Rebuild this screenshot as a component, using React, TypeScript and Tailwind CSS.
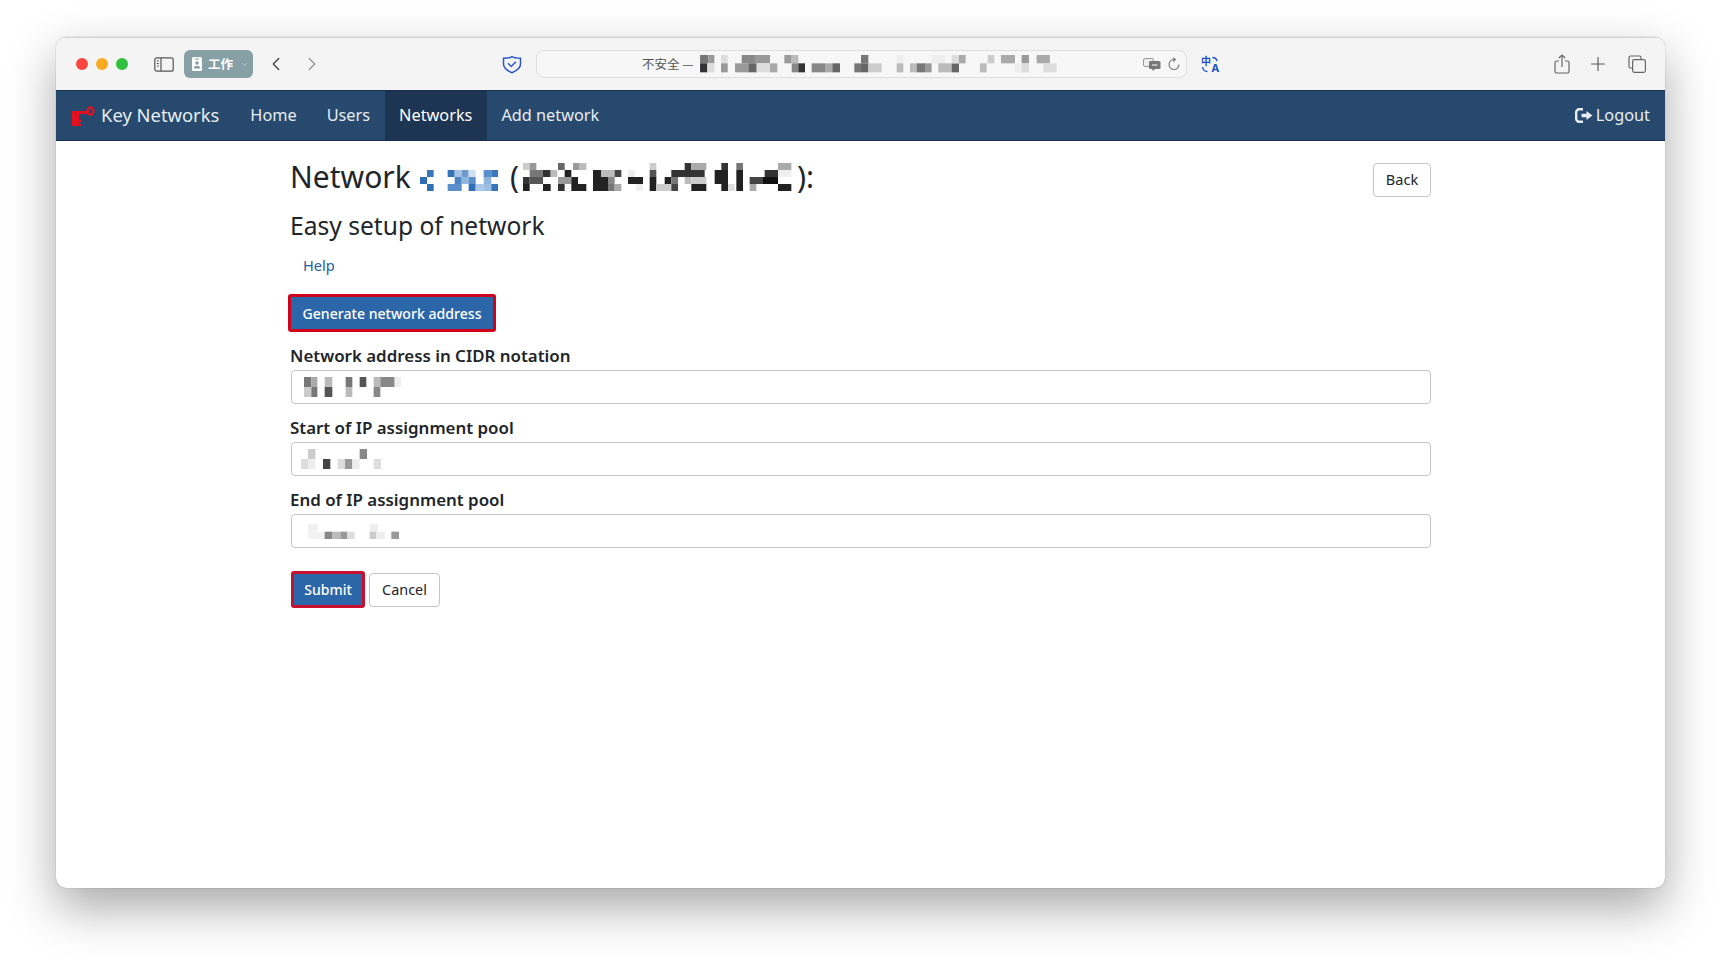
import React from "react";
import { ChevronDown, ChevronLeft, ChevronRight, Plus } from "lucide-react";

type Cell = [number, number, number, string];

// redacted (pixelated) pieces of the screenshot: [x0, x1, row, colour]
function Mosaic({
  x,
  w,
  rows,
  cells,
  className,
}: {
  x: number;
  w: number;
  rows: number[];
  cells: Cell[];
  className?: string;
}) {
  const top = rows[0];
  const h = rows[rows.length - 1] - top;
  return (
    <svg width={w / 3} height={h / 3} viewBox={`${x} ${top} ${w} ${h}`} className={className}>
      {cells.map(([x0, x1, row, fill], i) => (
        <rect key={i} x={x0} y={rows[row]} width={x1 - x0} height={rows[row + 1] - rows[row]} fill={fill} />
      ))}
    </svg>
  );
}

const urlCells: Cell[] = [
  [215, 240, 0, "#777"], [240, 258, 0, "#999"], [215, 237, 1, "#333"], [237, 258, 1, "#ddd"],
  [278, 298, 0, "#ddd"], [278, 298, 1, "#999"],
  [340, 380, 0, "#888"], [380, 425, 0, "#999"], [320, 360, 1, "#999"], [360, 385, 1, "#666"], [385, 425, 1, "#ddd"], [425, 447, 1, "#aaa"],
  [468, 490, 0, "#999"], [490, 510, 0, "#bbb"], [490, 510, 1, "#888"], [510, 530, 1, "#333"],
  [550, 590, 1, "#888"], [590, 612, 1, "#aaa"], [612, 635, 1, "#666"],
  [698, 720, 0, "#777"], [678, 698, 1, "#777"], [698, 720, 1, "#666"], [720, 760, 1, "#ccc"],
  [805, 825, 0, "#eee"], [805, 825, 1, "#bbb"],
  [845, 865, 1, "#bbb"], [865, 890, 1, "#777"], [890, 910, 1, "#999"], [910, 950, 0, "#eee"],
  [930, 970, 1, "#bbb"], [970, 992, 1, "#666"], [970, 992, 0, "#ddd"], [992, 1012, 0, "#aaa"],
  [1055, 1075, 1, "#bbb"], [1078, 1098, 0, "#ccc"],
  [1118, 1160, 0, "#aaa"], [1160, 1180, 1, "#eee"], [1180, 1202, 0, "#999"], [1180, 1202, 1, "#ddd"],
  [1225, 1265, 0, "#aaa"], [1245, 1285, 1, "#ddd"],
];

const blueCells: Cell[] = [
  [14, 35, 2, "#2f6db5"], [35, 55, 1, "#3a78bd"], [35, 55, 3, "#2f6db5"],
  [97, 118, 1, "#3573b8"], [118, 139, 1, "#a5c3e3"], [139, 160, 1, "#6d9bd0"], [118, 139, 2, "#4d84c4"],
  [97, 139, 3, "#5a8fcc"], [139, 160, 2, "#8fb5dc"], [160, 181, 3, "#2f6db5"],
  [160, 181, 1, "#cfe0f1"], [160, 181, 2, "#5a8fcc"], [181, 205, 3, "#a8c6e6"],
  [205, 228, 1, "#5a8fcc"], [205, 228, 2, "#8fb5dc"], [228, 249, 1, "#3a78bd"], [205, 228, 3, "#9dbde0"], [228, 249, 3, "#3573b8"],
];

const darkCells: Cell[] = [
  [325, 345, 0, "#ccc"], [345, 365, 0, "#999"], [430, 450, 0, "#666"], [475, 495, 0, "#999"], [495, 515, 0, "#bbb"],
  [705, 725, 0, "#ccc"], [810, 830, 0, "#333"], [830, 875, 0, "#aaa"], [920, 940, 0, "#333"], [965, 985, 0, "#777"], [1090, 1130, 0, "#aaa"],
  [345, 385, 1, "#777"], [385, 408, 1, "#333"], [408, 428, 1, "#bbb"], [450, 470, 1, "#222"], [535, 560, 1, "#222"], [560, 600, 1, "#bbb"], [600, 620, 1, "#444"],
  [640, 660, 1, "#eee"], [705, 725, 1, "#555"], [770, 870, 1, "#333"], [900, 940, 1, "#222"], [965, 985, 1, "#222"], [1050, 1090, 1, "#333"], [1090, 1130, 1, "#eee"],
  [325, 345, 2, "#333"], [345, 385, 2, "#555"], [430, 470, 2, "#999"], [470, 490, 2, "#222"], [535, 580, 2, "#222"], [580, 600, 2, "#888"], [640, 685, 2, "#222"],
  [705, 725, 2, "#222"], [750, 770, 2, "#222"], [770, 790, 2, "#777"], [810, 830, 2, "#bbb"], [830, 875, 2, "#ccc"], [900, 940, 2, "#222"], [965, 985, 2, "#222"], [1005, 1045, 2, "#444"], [1045, 1090, 2, "#111"],
  [325, 345, 3, "#222"], [385, 408, 3, "#222"], [430, 450, 3, "#333"], [470, 515, 3, "#222"], [535, 580, 3, "#222"], [580, 600, 3, "#777"], [600, 620, 3, "#aaa"],
  [665, 685, 3, "#eee"], [705, 725, 3, "#222"], [725, 770, 3, "#ccc"], [770, 790, 3, "#444"], [830, 875, 3, "#222"], [920, 940, 3, "#222"], [940, 960, 3, "#ddd"],
  [965, 985, 3, "#222"], [1005, 1025, 3, "#aaa"], [1090, 1130, 3, "#222"],
];

const cidrCells: Cell[] = [
  [103, 125, 0, "#777"], [125, 143, 0, "#aaa"], [165, 188, 0, "#bbb"], [228, 248, 0, "#777"], [270, 290, 0, "#555"], [312, 332, 0, "#bbb"], [332, 375, 0, "#888"], [375, 395, 0, "#eee"],
  [103, 125, 1, "#ccc"], [125, 143, 1, "#777"], [165, 188, 1, "#555"], [228, 248, 1, "#bbb"], [312, 332, 1, "#888"],
];

const startCells: Cell[] = [
  [113, 135, 0, "#ccc"], [268, 290, 0, "#888"],
  [92, 113, 1, "#ddd"], [113, 135, 1, "#eee"], [158, 180, 1, "#444"], [202, 224, 1, "#ddd"], [224, 246, 1, "#999"], [246, 268, 1, "#eee"], [310, 332, 1, "#ddd"],
];

const endCells: Cell[] = [
  [115, 145, 0, "#f0f0f0"], [300, 325, 0, "#eee"],
  [115, 165, 1, "#f2f2f2"], [165, 188, 1, "#888"], [188, 212, 1, "#bbb"], [212, 232, 1, "#999"], [232, 255, 1, "#ddd"], [300, 320, 1, "#ccc"], [320, 345, 1, "#eee"], [365, 388, 1, "#999"],
];

function KeyLogo() {
  return (
    <svg width="23" height="20" viewBox="0 0 23 20" fill="none" className="shrink-0">
      <path d="M0 5h14v3H7v12H0z" fill="#e5101f" />
      <ellipse cx="18.5" cy="5" rx="3" ry="3.8" stroke="#e5101f" strokeWidth="2.2" />
      <path d="M14 5l3-.5v3l-3 .5z" fill="#e5101f" />
      <path d="M9 14l-3 3 3 3" stroke="#e5101f" strokeWidth="2" />
    </svg>
  );
}

function LogoutIcon() {
  return (
    <svg width="18" height="15" viewBox="0 0 18 15" className="shrink-0">
      <path d="M8 1.3H4.2A3 3 0 0 0 1.2 4.3v6.4a3 3 0 0 0 3 3H8" fill="none" stroke="currentColor" strokeWidth="2.4" />
      <path d="M6.5 5.8H11.5V3L17.5 7.5L11.5 12V9.2H6.5z" fill="currentColor" />
    </svg>
  );
}

function Field({ label, children }: { label: string; children: React.ReactNode }) {
  return (
    <div className="flex flex-col">
      <label className="h-[21px] text-[16.9px] font-semibold leading-[21px] text-[#212529]">{label}</label>
      <div className="ml-[1px] mt-[4px] flex h-[34px] items-center rounded-[4px] border border-[#c4c4c4] bg-white">{children}</div>
    </div>
  );
}

export default function App() {
  return (
    <div className="h-[962px] w-[1721px] bg-white pt-[37px] px-[56px] font-['Noto_Sans',sans-serif] text-[#212529]">
      <div className="flex h-[851px] flex-col overflow-hidden rounded-[10px] bg-white shadow-[0_20px_48px_rgba(0,0,0,0.34),0_0_1px_rgba(0,0,0,0.5)]">
        {/* browser toolbar */}
        <div className="flex h-[53px] shrink-0 items-center border-t border-[#d2d2d2] bg-[#f4f4f4]">
          <div className="ml-[20px] flex gap-[8px]">
            <span className="h-[12px] w-[12px] rounded-full bg-[#f9463f]" />
            <span className="h-[12px] w-[12px] rounded-full bg-[#fcaa24]" />
            <span className="h-[12px] w-[12px] rounded-full bg-[#2fc13d]" />
          </div>
          <svg width="20" height="15" viewBox="0 0 20 15" fill="none" stroke="#555" strokeWidth="1.2" className="ml-[26px]">
            <rect x="0.8" y="0.8" width="18.4" height="13.4" rx="2" />
            <path d="M7 1v13" />
            <path d="M2.8 4h2M2.8 6.5h2M2.8 9h2" />
          </svg>
          <div className="ml-[10px] flex h-[28px] w-[69px] items-center rounded-[6px] bg-[#86a0a6] pl-[8px] text-white">
            <svg width="10" height="14" viewBox="0 0 10 14" className="shrink-0">
              <rect width="10" height="14" rx="1.5" fill="#fff" />
              <rect x="3" y="1.5" width="4" height="1" fill="#86a0a6" />
              <circle cx="5" cy="6" r="1.8" fill="#86a0a6" />
              <path d="M1.8 11.5a3.2 2.8 0 0 1 6.4 0z" fill="#86a0a6" />
            </svg>
            <span className="ml-[6px] text-[12.5px] font-bold leading-none font-['Noto_Sans_CJK_SC',sans-serif]">工作</span>
            <ChevronDown size={9} strokeWidth={2} className="ml-[7px] text-[#c9d6d9]" />
          </div>
          <ChevronLeft size={22} strokeWidth={1.5} className="ml-[12px] text-[#444]" />
          <ChevronRight size={22} strokeWidth={1.5} className="ml-[14px] text-[#999]" />
          <svg width="20" height="19" viewBox="0 0 20 19" fill="none" stroke="#2a57c8" strokeWidth="1.5" className="ml-[179px]">
            <path d="M1.5 3.2C6 3.2 8.5 2.6 10 1.6C11.5 2.6 14 3.2 18.5 3.2V9C18.5 13 14.5 15.8 10 17.8C5.5 15.8 1.5 13 1.5 9Z" />
            <path d="M6 8.3l3.2 3.2L14 6.8" />
          </svg>
          {/* address bar */}
          <div className="ml-[14px] flex h-[28px] w-[651px] items-center rounded-[8px] border border-[#dedede] bg-[#f7f7f7]">
            <span className="ml-[105px] whitespace-nowrap font-['Noto_Sans_CJK_SC',sans-serif] text-[12.5px] leading-none text-[#555]">不安全 —</span>
            <Mosaic x={215} w={1070} rows={[33, 58, 85]} cells={urlCells} className="ml-[7px] shrink-0" />
            <svg width="18" height="13" viewBox="0 0 18 13" className="ml-[86px] shrink-0">
              <rect x="0.5" y="0.5" width="10" height="8" rx="1.5" fill="#eee" stroke="#999" />
              <rect x="6" y="3" width="11.5" height="8" rx="1.5" fill="#777" />
              <path d="M9 11l1 2 2-2z" fill="#777" />
              <path d="M9 7h5.5" stroke="#fff" />
            </svg>
            <svg width="12" height="14" viewBox="0 0 12 14" fill="none" stroke="#777" strokeWidth="1.1" className="ml-[7px] shrink-0">
              <path d="M7 2.6A5 5 0 1 0 11 7.5" />
              <path d="M5 0.6L7.4 2.6L5.2 4.8" />
            </svg>
          </div>
          <div className="relative ml-[14px] h-[17px] w-[18px] text-[#1a50c8]">
            <span className="absolute left-0 top-0 text-[10px] font-bold leading-[10px] font-['Noto_Sans_CJK_SC',sans-serif]">中</span>
            <span className="absolute bottom-0 right-0 text-[11px] font-bold leading-[11px]">A</span>
            <svg width="18" height="17" viewBox="0 0 18 17" fill="none" stroke="currentColor" strokeWidth="1.4" className="absolute inset-0">
              <path d="M11.5 1.5C14 1.5 15.5 2.5 16 5M1.5 11C2 14 3.5 15.5 6.5 15.5" />
            </svg>
          </div>
          <div className="ml-auto mr-[19px] flex items-center">
            <svg width="16" height="20" viewBox="0 0 16 20" fill="none" stroke="#666" strokeWidth="1.2">
              <path d="M5 7H2.5A1.5 1.5 0 0 0 1 8.5v9A1.5 1.5 0 0 0 2.5 19h11a1.5 1.5 0 0 0 1.5-1.5v-9A1.5 1.5 0 0 0 13.5 7H11" />
              <path d="M8 13V1M4.8 4L8 1l3.2 3" />
            </svg>
            <Plus size={22} strokeWidth={1.2} className="ml-[17px] text-[#555]" />
            <svg width="18" height="18" viewBox="0 0 18 18" fill="none" stroke="#666" strokeWidth="1.2" className="ml-[19px]">
              <path d="M13 4V2.5A1.5 1.5 0 0 0 11.5 1H2.5A1.5 1.5 0 0 0 1 2.5v9A1.5 1.5 0 0 0 2.5 13H4" />
              <rect x="4.6" y="4.6" width="12.8" height="12.8" rx="1.8" />
            </svg>
          </div>
        </div>

        {/* navbar */}
        <div className="flex h-[51px] shrink-0 items-center border-y border-[#16304e] bg-[#26496d] text-[16.3px] text-[#e6edf3]">
          <div className="ml-[16px] flex items-center">
            <KeyLogo />
            <span className="ml-[6px] text-[18.4px] leading-none">Key Networks</span>
          </div>
          <span className="ml-[31px]">Home</span>
          <span className="ml-[30px]">Users</span>
          <span className="ml-[15px] flex h-full items-center bg-[#1d3553] pl-[14px] pr-[15px] text-white">Networks</span>
          <span className="ml-[14px]">Add network</span>
          <div className="ml-auto mr-[15px] flex items-center">
            <LogoutIcon />
            <span className="ml-[3px]">Logout</span>
          </div>
        </div>

        {/* page */}
        <div className="flex flex-col px-[234px]">
          <div className="mt-[15px] flex items-start justify-between">
            <h1 className="flex h-[42px] items-center text-[30px] font-normal leading-[42px]">
              Network
              <Mosaic x={14} w={235} rows={[22, 43, 64, 85, 106]} cells={blueCells} className="ml-[9px]" />
              <span className="ml-[12px]">(</span>
              <Mosaic x={325} w={810} rows={[22, 43, 64, 85, 106]} cells={darkCells} className="ml-[4px]" />
              <span className="ml-[4px]">):</span>
            </h1>
            <button className="mt-[7px] h-[34px] w-[58px] rounded-[4px] border border-[#c4c4c4] bg-white text-[14.5px]">Back</button>
          </div>
          <h2 className="mt-[11px] text-[24.6px] font-normal leading-[33px]">Easy setup of network</h2>
          <a className="ml-[13px] mt-[13px] text-[14.6px] leading-[21px] text-[#24609f]">Help</a>
          <button className="mt-[18px] h-[38px] w-[208px] -translate-x-[2px] rounded-[3px] border-[3px] border-[#d0021b] bg-[#2b66a8] pt-[2px] text-[14.1px] font-medium text-white">
            Generate network address
          </button>

          <div className="mt-[13px] flex flex-col gap-[13px]">
            <Field label="Network address in CIDR notation">
              <Mosaic x={103} w={292} rows={[110, 140, 170]} cells={cidrCells} className="ml-[12px]" />
            </Field>
            <Field label="Start of IP assignment pool">
              <Mosaic x={92} w={240} rows={[330, 360, 392]} cells={startCells} className="ml-[9px]" />
            </Field>
            <Field label="End of IP assignment pool">
              <Mosaic x={115} w={273} rows={[545, 568, 590]} cells={endCells} className="ml-[16px]" />
            </Field>
          </div>

          <div className="ml-[1px] mt-[23px] flex items-center gap-[4px]">
            <button className="h-[37px] w-[74px] rounded-[3px] border-[3px] border-[#c8102e] bg-[#2b66a8] text-[14px] font-medium text-white">Submit</button>
            <button className="h-[34px] w-[71px] rounded-[4px] border border-[#c4c4c4] bg-white text-[14.4px]">Cancel</button>
          </div>
        </div>
      </div>
    </div>
  );
}
